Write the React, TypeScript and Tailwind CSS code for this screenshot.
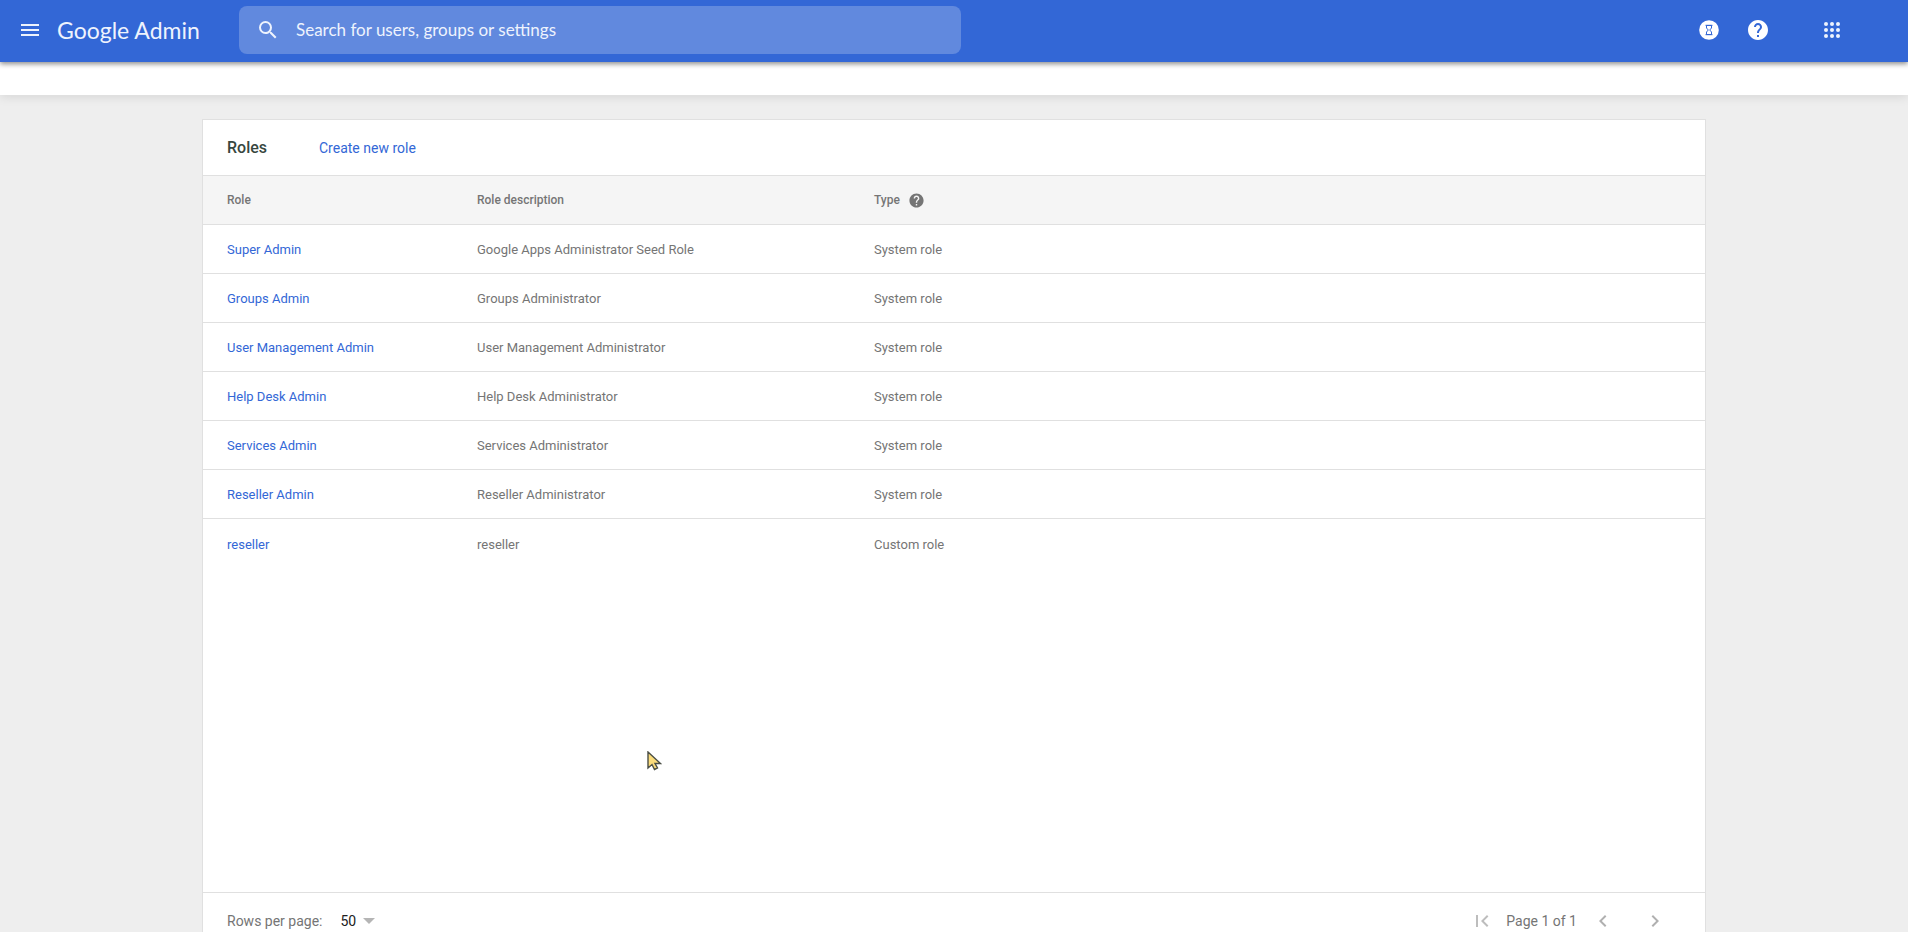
import React from 'react';
import { MdChevronLeft, MdChevronRight, MdFirstPage, MdHelp, MdMenu, MdSearch } from 'react-icons/md';

const roles = [
  { name: 'Super Admin', description: 'Google Apps Administrator Seed Role', type: 'System role' },
  { name: 'Groups Admin', description: 'Groups Administrator', type: 'System role' },
  { name: 'User Management Admin', description: 'User Management Administrator', type: 'System role' },
  { name: 'Help Desk Admin', description: 'Help Desk Administrator', type: 'System role' },
  { name: 'Services Admin', description: 'Services Administrator', type: 'System role' },
  { name: 'Reseller Admin', description: 'Reseller Administrator', type: 'System role' },
  { name: 'reseller', description: 'reseller', type: 'Custom role' },
];

function TasksIcon() {
  return (
    <svg width="24" height="24" viewBox="0 0 24 24" fill="none">
      <circle cx="12" cy="12" r="9.8" fill="#fff" />
      <path d="M9.500 7.500h5v2.500L12.700 12l1.800 2v2.500h-5V14l1.800-2-1.800-2z" stroke="#3367d6" strokeWidth="1" />
      <path d="M8.500 7.300h7M8.500 16.700h7" stroke="#3367d6" strokeWidth="1" />
    </svg>
  );
}

function AppsIcon() {
  return (
    <svg width="24" height="24" viewBox="0 0 24 24" fill="currentColor">
      {[6, 12, 18].map((y) => [6, 12, 18].map((x) => <circle key={`${x}-${y}`} cx={x} cy={y} r="2" />))}
    </svg>
  );
}

function Header() {
  return (
    <header className="relative z-20 flex h-[62px] shrink-0 items-center bg-[#3367d6] pb-0.5 pl-[18px] pr-16 text-[#eef3fd] shadow-[0_2px_5px_rgba(0,0,0,0.45)]">
      <button type="button" aria-label="Main menu" className="shrink-0">
        <MdMenu size={24} />
      </button>
      <a href="#" className="ml-[15px] w-[182px] shrink-0 font-['Lato',sans-serif] text-[23px] leading-8">Google Admin</a>
      <div className="flex h-12 w-full max-w-[722px] items-center rounded-lg bg-[#6189de] pl-[17px]">
        <MdSearch size={24} className="shrink-0" />
        <input
          type="text"
          aria-label="Search"
          placeholder="Search for users, groups or settings"
          className="ml-4 h-full flex-1 bg-transparent pb-0.5 font-['Lato',sans-serif] text-[17px] placeholder:text-[#eef3fd] focus:outline-none"
        />
      </div>
      <div className="ml-auto flex items-center pl-6">
        <button type="button" aria-label="Tasks"><TasksIcon /></button>
        <button type="button" aria-label="Help" className="ml-[25px] text-white"><MdHelp size={24} /></button>
        <button type="button" aria-label="Google apps" className="ml-[50px]"><AppsIcon /></button>
      </div>
    </header>
  );
}

function RolesTable() {
  return (
    <table className="w-full table-fixed border-separate border-spacing-0 text-left text-[13px] text-[#757575]">
      <thead>
        <tr className="h-[49px] bg-[#f5f5f5] text-xs *:border-b *:border-[#e0e0e0]">
          <th className="w-[250px] pl-6 font-medium">Role</th>
          <th className="w-[397px] pl-6 font-medium">Role description</th>
          <th className="pl-6 font-medium">
            <span className="flex items-center gap-2">
              Type
              <MdHelp size={17} className="text-[#757575]" />
            </span>
          </th>
        </tr>
      </thead>
      <tbody>
        {roles.map((role) => (
          <tr key={role.name} className="h-[49px] *:border-b *:border-[#e0e0e0] *:pt-0.5 last:*:border-b-0">
            <td className="pl-6"><a href="#" className="text-[#3367d6]">{role.name}</a></td>
            <td className="pl-6">{role.description}</td>
            <td className="pl-6">{role.type}</td>
          </tr>
        ))}
      </tbody>
    </table>
  );
}

function Pagination() {
  return (
    <div className="flex h-14 items-center border-t border-[#e0e0e0] pl-6 pr-[38px] text-sm text-[#757575]">
      <label htmlFor="rows-per-page">Rows per page:</label>
      <div className="relative ml-[18px] flex items-center">
        <select id="rows-per-page" defaultValue="50" className="w-[35px] appearance-none bg-transparent text-[#212121] focus:outline-none">
          <option>50</option>
        </select>
        <span className="pointer-events-none absolute right-0 border-x-6 border-t-6 border-x-transparent border-t-[#b5b5b5]" />
      </div>
      <div className="ml-auto flex items-center">
        <button type="button" aria-label="First page" className="text-[#bdbdbd]"><MdFirstPage size={24} /></button>
        <span className="ml-3">Page 1 of 1</span>
        <button type="button" aria-label="Previous page" className="ml-[14px] text-[#b0b0b0]"><MdChevronLeft size={24} /></button>
        <button type="button" aria-label="Next page" className="ml-7 text-[#b0b0b0]"><MdChevronRight size={24} /></button>
      </div>
    </div>
  );
}

export default function App() {
  return (
    <div className="relative flex h-screen flex-col overflow-hidden bg-[#eeeeee] font-['Roboto',sans-serif]">
      <Header />
      <div className="z-10 h-[33px] shrink-0 bg-white shadow-[0_2px_10px_rgba(0,0,0,0.1)]" />
      <main className="mx-auto mt-6 w-full max-w-[1504px] shrink-0 border border-[#e0e0e0] bg-white">
        <div className="flex h-14 items-center border-b border-[#e0e0e0] px-6">
          <h1 className="w-[92px] text-base font-medium text-[#37473f]">Roles</h1>
          <a href="#" className="text-sm text-[#3367d6]">Create new role</a>
        </div>
        <div className="min-h-[716px]">
          <RolesTable />
        </div>
        <Pagination />
      </main>
      <svg className="pointer-events-none absolute left-[647px] top-[751px] z-30" width="15" height="20" viewBox="0 0 15 20">
        <path d="M1 1v16l4-3.500 2.500 5 3-1.500-2.500-4.500h5.500z" fill="#fbdc7b" stroke="#4b4f45" strokeWidth="1.400" />
      </svg>
    </div>
  );
}
